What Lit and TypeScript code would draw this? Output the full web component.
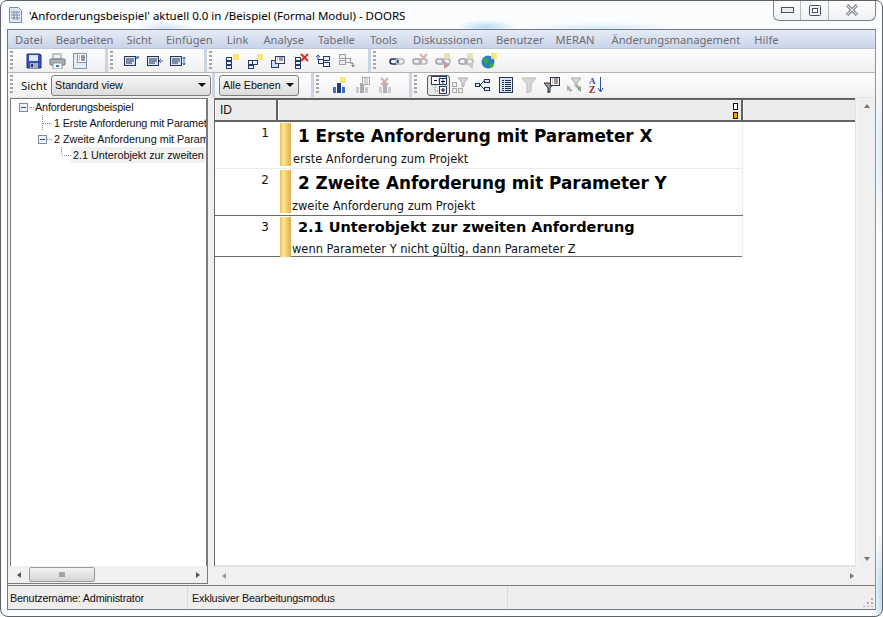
import { LitElement, html, css, svg } from "lit";
import { customElement } from "lit/decorators.js";

const ic = (body: unknown, w = 16, h = 16) =>
  html`<svg class="ic" width=${w} height=${h} viewBox="0 0 ${w} ${h}" xmlns="http://www.w3.org/2000/svg">${body}</svg>`;

const box = (x: number, y: number, w: number, h: number, s = "#223a70", f = "#e8eefa") =>
  svg`<rect x=${x + 0.5} y=${y + 0.5} width=${w} height=${h} fill=${f} stroke=${s}/>`;
const star = (x: number, y: number, c = "#f5d94a") =>
  svg`<rect x=${x} y=${y} width="6" height="6" fill=${c} opacity=".85"/><path d="M${x} ${y + 1}h6M${x} ${y + 3}h6M${x} ${y + 5}h6" stroke="#fff6b0" stroke-width=".6"/>`;
const redX = (x: number, y: number, c = "#e02a18") =>
  svg`<path d="M${x} ${y}l7 7M${x + 7} ${y}l-7 7" stroke=${c} stroke-width="2"/>`;
const lines = (x: number, y: number, n: number, w: number, c = "#1f2a44") =>
  svg`${Array.from({ length: n }, (_, i) => svg`<path d="M${x} ${y + i * 2 + 0.5}h${w}" stroke=${c}/>`)}`;

const save = ic(svg`<path d="M1 1h13l1 1v13H1z" fill="#3a4fb4" stroke="#20307c"/><rect x="3" y="2" width="9" height="6" fill="#dfe6f8"/><rect x="4" y="10" width="8" height="5" fill="#a8aec4"/><rect x="5" y="11" width="2" height="3" fill="#2a3575"/>`);
const printer = ic(svg`<rect x="4" y="1" width="8" height="5" fill="#eef0f4" stroke="#8a949e"/><rect x="1" y="6" width="15" height="6" rx="1" fill="#a8b0b8" stroke="#6c7680"/><rect x="4" y="10" width="9" height="6" fill="#fff" stroke="#8a949e"/><rect x="7" y="12" width="3" height="2" fill="#3a74c8"/>`, 17);
const docIcon = ic(svg`<rect x="1.500" y=".5" width="13" height="15" fill="#e4ecf6" stroke="#8296b4"/><rect x="5.500" y=".5" width="9" height="9" fill="#fff" stroke="#8296b4"/><path d="M7 3h1M7 5h1M7 7h1" stroke="#d8741c"/><path d="M9 3h4M9 5h4M9 7h4" stroke="#334"/>`);

const attr = (arrow: unknown) => ic(svg`<rect x=".5" y="3.500" width="11" height="9" fill="#d6e4f8" stroke="#26344f"/><path d="M2 6h8M2 8h8M2 10h6" stroke="#26344f"/>${arrow}`);
const a1 = attr(svg`<path d="M12 6l2-2M12 4h3M14 3v3" stroke="#3767c0" fill="none"/>`);
const a2 = attr(svg`<path d="M16 8h-4M14 6l-2 2 2 2" stroke="#3767c0" fill="none"/>`);
const a3 = attr(svg`<path d="M14 4v8M12.500 6L14 4l1.500 2M12.500 10l1.500 2 1.500-2" stroke="#3767c0" fill="none"/>`);

const stack = (s = "#223a70", f = "#e8eefa") => svg`${box(2, 4, 5, 3, s, f)}${box(2, 8, 5, 3, s, f)}${box(2, 12, 5, 3, s, f)}`;
const h1 = ic(svg`${stack()}${star(9, 1)}`);
const h2 = ic(svg`${box(1, 12, 5, 3)}${box(1, 7, 5, 4)}${box(5, 7, 5, 4)}${star(10, 1)}`);
const h3 = ic(svg`<rect x="1.500" y="7.500" width="7" height="7" fill="#d0def4" stroke="#2a3f70"/><rect x="5.500" y="3.500" width="9" height="7" fill="#fff" stroke="#2a3f70"/><path d="M7 5h1M7 7h1" stroke="#d8741c"/><path d="M9 5h4M9 7h4" stroke="#334"/>`);
const h4 = ic(svg`${stack()}${redX(8, 1)}`);
const h5 = ic(svg`<path d="M3 7V2M1 4l2-2 2 2" stroke="#2656c0" fill="none"/><path d="M4 8h4" stroke="#223a70"/>${box(8, 3, 6, 4)}${box(8, 9, 6, 4)}${box(3, 6, 5, 4)}`, 17);
const h6 = ic(svg`${box(1, 1, 6, 4, "#9aa0a8", "#eee")}${box(1, 7, 6, 4, "#9aa0a8", "#eee")}${box(7, 5, 5, 4, "#9aa0a8", "#eee")}<path d="M12 10h3v3M13.500 12l1.500 2 1.500-2" stroke="#777" fill="none"/>`, 17);

const link = (on: boolean) => svg`<rect x="1" y="6" width="8" height="5" rx="2.500" fill="none" stroke=${on ? "#1a2f7a" : "#9a9ea8"} stroke-width="1.500"/><rect x="7" y="6" width="8" height="5" rx="2.500" fill="none" stroke="#b0b4ba" stroke-width="1.500"/>`;
const l1 = ic(link(true));
const l2 = ic(svg`${link(false)}${redX(8, 1, "#c8b4ac")}`);
const l3 = ic(svg`${link(false)}${star(9, 0, "#d8d0b8")}<path d="M9 8l6 4-6 4z" fill="#c09a94"/>`);
const l4 = ic(svg`${link(false)}${star(9, 0, "#d8d0b8")}<path d="M15 8l-6 4 6 4z" fill="#cfc8bc"/>`);
const globe = ic(svg`<circle cx="7" cy="9" r="6.500" fill="#2d7fc4"/><path d="M3 5l4 1 1 3-3 3-2-3zM9 11l4-1-1 4-3 1z" fill="#3fa83a"/>${star(10, 0)}`);

const org = (c: string, c2: string) => svg`<rect x="2" y="10" width="3" height="6" fill=${c}/><rect x="6" y="6" width="4" height="10" fill=${c2}/><rect x="11" y="10" width="3" height="6" fill=${c}/>`;
const o1 = ic(svg`${org("#4070b8", "#1c3f88")}${star(9, 0)}`);
const o2 = ic(svg`${org("#c8cace", "#a8acb2")}<rect x="8.500" y=".5" width="7" height="7" fill="#fff" stroke="#aaa"/><path d="M10 2h4M10 4h4M10 6h4" stroke="#aaa"/>`);
const o3 = ic(svg`${org("#cbcdd0", "#b0b2b6")}${redX(4, 1, "#d4b0a8")}`);

const expand = ic(svg`<rect x="1.500" y="1.500" width="15" height="8" fill="#d6e4f4" stroke="#25405f"/><path d="M2 2h6v7H2z" fill="#fff"/><path d="M4 5.500h3" stroke="#111"/><rect x="9.500" y="3.500" width="7" height="6" fill="#f4f6fa" stroke="#25405f"/><path d="M11 6.500h4M13 4.500v4" stroke="#111"/><rect x="9.500" y="11.500" width="7" height="7" fill="#f4f6fa" stroke="#25405f"/><path d="M11 15h4M13 13v4" stroke="#111"/><path d="M5 10v6h4" stroke="#888" stroke-dasharray="1 1" fill="none"/>`, 18, 20);
const filt = (c: string, s: string) => svg`<path d="M1 1h14L10 7v7l-4 2V7z" fill=${c} stroke=${s}/>`;
const f1 = ic(svg`${box(0, 5, 4, 4, "#aaa", "#eee")}${box(0, 11, 4, 4, "#aaa", "#eee")}${box(6, 11, 4, 4, "#aaa", "#eee")}<path d="M6 1h10l-4 5v3l-2 1V6z" fill="#d4d4d4" stroke="#aaa"/>`);
const tree2 = ic(svg`<path d="M1 8h4M5 8l4-4M5 8l4 4" stroke="#22345a" fill="none"/><rect x="9.500" y="2.500" width="5" height="3" fill="#dde8f6" stroke="#22345a"/><rect x="9.500" y="10.500" width="5" height="3" fill="#dde8f6" stroke="#22345a"/><rect x=".5" y="6.500" width="4" height="3" fill="#dde8f6" stroke="#22345a"/>`);
const listIc = ic(svg`<rect x="1.500" y=".5" width="13" height="15" fill="#d8e6f4" stroke="#22345a"/>${lines(4, 3, 6, 2)}${lines(7, 3, 6, 6)}`);
const f2 = ic(filt("#d8d8d8", "#b8b8b8"));
const f3 = ic(svg`<path d="M0 6h10L6 11v4l-2 1v-5z" fill="#999" stroke="#333"/><rect x="6.500" y=".5" width="9" height="8" fill="#fff" stroke="#22345a"/><path d="M8 2h1M8 4h1M8 6h1" stroke="#d8741c"/><path d="M10 2h4M10 4h4M10 6h4" stroke="#334"/>`);
const f4 = ic(svg`<path d="M5 1h10l-4 5v3H9V6z" fill="#d4d4d4" stroke="#aaa"/><path d="M1 8l4 3-1 1 3 1-3 2-1-2-2 1z" fill="#9db89a"/><path d="M15 15l-4-3 1-1-3-1 3-2 1 2 2-1z" fill="#8aa888"/>`);
const az = ic(svg`<text x="0" y="7" font-family="Liberation Serif" font-weight="700" font-size="9" fill="#2c50a8">A</text><text x="0" y="15.500" font-family="Liberation Serif" font-weight="700" font-size="9.500" fill="#8a2a20">Z</text><path d="M11.500 0v14M9 11l2.500 4 2.500-4" stroke="#2c50a8" fill="none"/>`);

const tb1 = [[save, printer, docIcon], [a1, a2, a3], [h1, h2, h3, h4, h5, h6], [l1, l2, l3, l4, globe]];

const menu: [string, number][] = [["Datei", 0], ["Bearbeiten", -1], ["Sicht", -1], ["Einfügen", 0], ["Link", 0], ["Analyse", 1], ["Tabelle", 0], ["Tools", 1], ["Diskussionen", 2], ["Benutzer", -1], ["MERAN", -2], ["Änderungsmanagement", 3], ["Hilfe", 0]];

@customElement("app-root")
export class AppRoot extends LitElement {
  static styles = css`
    :host { display: block; width: 883px; height: 617px; font-family: "Noto Sans", sans-serif; color: #111; }
    * { box-sizing: border-box; }
    .win {
      position: relative; width: 883px; height: 617px; padding: 0 6px 6px 6px;
      border: 1px solid #5e6266; border-radius: 7px 7px 8px 8px;
      display: flex; flex-direction: column; overflow: hidden;
      background:
        radial-gradient(ellipse 30px 6px at 165px 27px, #cfe6f6, transparent),
        radial-gradient(ellipse 30px 7px at 485px 26px, #b8dcf2, transparent),
        radial-gradient(ellipse 80px 6px at 600px 27px, #d8ecf8, transparent),
        radial-gradient(ellipse 8px 60px at 880px 590px, #b8dcf2, transparent),
        radial-gradient(ellipse 8px 90px at 880px 150px, #d8ecf8, transparent),
        #fbfcfd;
    }
    .title { height: 28px; flex: none; display: flex; align-items: center; gap: 5px; padding: 0 0 0 1px; font-size: 11.500px; color: #000; white-space: nowrap; }
    .ctrl { position: absolute; left: 772px; top: -1px; width: 103px; height: 21px; display: grid; grid-template-columns: 27px 28px 1fr;
      border: 1px solid #7d8186; border-top: none; border-radius: 0 0 6px 6px; background: linear-gradient(#fff, #eef0f3); }
    .ctrl div { display: flex; align-items: center; justify-content: center; border-right: 1px solid #b6bbc0; }
    .ctrl div:last-child { border-right: none; }
    .client { flex: 1; display: flex; flex-direction: column; border: 1px solid #6f7880; border-right-color: #8b9298; min-height: 0; background: #f0f0f0; }
    .menu { height: 19px; flex: none; display: flex; align-items: center; padding: 0 0 0 7px; gap: 14px; font-size: 11.200px; color: #6e6e72;
      background: linear-gradient(#e6ebf6, #c9d3e9); border-bottom: 1px solid #bcc6da; white-space: nowrap; }
    .tb { flex: none; display: flex; align-items: center; white-space: nowrap; }
    .tb1 { height: 24px; background: linear-gradient(#fefefe, #efefef); border-bottom: 1px solid #b4b4b4; }
    .tb2 { height: 24px; background: linear-gradient(#fdfdfd, #f1f1f1); }
    .grip { width: 3px; height: 20px; margin: 0 3px 0 2px; flex: none; background: repeating-linear-gradient(#a6a6a6 0 2px, transparent 2px 4px); }
    .group { display: flex; align-items: center; flex: none; height: 100%; border-right: 3px solid #c9d4e4; }
    .group.last { border-right: none; }
    .btn { width: 23px; height: 20px; display: flex; align-items: center; justify-content: center; flex: none; }
    .ic { display: block; flex: none; }
    .g1 { width: 92px; padding-left: 6.500px; }
    .g2 { width: 91px; padding-left: 4px; }
    .g3 { width: 156px; padding-left: 5px; }
    .g4 { padding-left: 6px; }
    .tg1 { width: 207px; }
    .sicht { font-size: 11.500px; margin: 0 4px 0 5px; color: #111; }
    .combo { height: 21px; border: 1px solid #7f7f7f; border-radius: 3px; background: linear-gradient(#f6f6f6, #dcdcdc); display: flex; align-items: center; justify-content: space-between;
      font-family: "Liberation Sans", sans-serif; font-size: 10.700px; padding: 0 4px 0 3px; flex: none; color: #111; }
    .combo i { width: 0; height: 0; border: 4px solid transparent; border-top: 4px solid #111; border-bottom: none; }
    .c1 { width: 160px; }
    .tg2 { width: 99px; padding-left: 4px; }
    .c2 { width: 80px; }
    .tg3 { width: 90px; padding-left: 6px; }
    .tg3 .btn, .tg4 .btn { width: 22.800px; }
    .tg4 { padding-left: 7px; }
    .tg4 .toggled { width: 23px; height: 21px; border: 1px solid #5a5a5a; border-radius: 3px; background: #e9e9e9; margin-right: -1px; }
    .main { flex: 1; min-height: 0; display: flex; background: #f0f0f0; border-top: 1px solid #e6e6e6; border-bottom: 1px solid #7c7c7c; }
    .left { width: 200px; flex: none; display: flex; flex-direction: column; padding: 0 0 0 2px; border: 1px solid #7b7b7b; border-top: none; border-left: none; margin-bottom: 1px; background: #f0f0f0; }
    .tree { flex: 1; min-height: 0; background: #fff; border: 1px solid #7c7c7c; border-bottom: none; overflow: hidden; font-family: "Liberation Sans", sans-serif; font-size: 10.800px; color: #111; letter-spacing: -.15px; }
    .node { height: 16px; display: flex; align-items: center; white-space: nowrap; }
    .node svg { flex: none; }
    .n0 { padding-left: 8px; }
    .n1 { padding-left: 31px; }
    .n2 { padding-left: 27px; letter-spacing: 0; }
    .n3 { padding-left: 50px; letter-spacing: 0; }
    .t0 { margin-left: -1px; }
    .sel { background: #f0f0f0; padding: 0 2px; height: 16px; line-height: 16px; width: 134px; overflow: hidden; flex: none; }
    .sb-h { height: 17px; flex: none; display: flex; align-items: center; background: #f0f0f0; }
    .thumb { width: 66px; height: 15px; margin-left: 8px; border: 1px solid #9a9a9a; border-radius: 2px; background: linear-gradient(#f4f4f4, #d4d4d4); display: flex; align-items: center; justify-content: center; }
    .ar { width: 0; height: 0; border: 3.500px solid transparent; flex: none; }
    .ar.l { border-right: 4px solid #555; border-left: none; margin-left: 7px; }
    .ar.r { border-left: 4px solid #555; border-right: none; }
    .left .ar.r { margin-right: 7px; }
    .spacer { flex: 1; }
    .right { flex: 1; min-width: 0; margin-left: 6px; display: flex; flex-direction: column; }
    .view { flex: 1; min-height: 0; display: flex; }
    .sheet { width: 642px; flex: none; background: #fff; border-left: 1px solid #6a6a6a; border-right: 1px solid #e3e3e3; border-bottom: 2px solid #e3e3e3; display: flex; flex-direction: column; }
    .head { height: 24px; flex: none; display: grid; grid-template-columns: 63px 465px 1fr; background: #ececec; border-top: 2px solid #636363; border-bottom: 2px solid #636363; font-family: "Liberation Sans", sans-serif; font-size: 12px; }
    .hc { display: flex; align-items: center; padding-left: 5px; border-right: 2px solid #616161; box-shadow: inset 1px 0 0 #fff; position: relative; }
    .hc:last-child { border-right: none; }
    .flags { position: absolute; right: 3px; top: 3px; display: flex; flex-direction: column; gap: 2px; }
    .flags span { width: 5px; height: 7px; border: 1px solid #111; background: #fff; display: block; }
    .flags span + span { background: #f2a100; }
    .row { display: grid; grid-template-columns: 63px 465px; width: 528px; flex: none; font-family: "DejaVu Sans", sans-serif; }
    .row .id { text-align: right; padding: 4px 9px 0 0; font-size: 12px; }
    .r1 { height: 47px; border-bottom: 1px solid #ececec; }
    .r2 { height: 47px; border-bottom: 1px solid #6d6d6d; }
    .r3 { height: 41px; border-bottom: 1px solid #6d6d6d; }
    .cell { display: flex; align-items: stretch; padding-left: 2px; min-width: 0; border-right: 1px solid #ececec; }
    .bar { width: 11px; flex: none; margin: 1px 0 2px; background: linear-gradient(90deg, #e9bd5c, #ffe98e 30%, #f4d277 55%, #dcae56); }
    .r3 .bar { margin-bottom: 0; }
    .txt { min-width: 0; white-space: nowrap; display: flex; flex-direction: column; }
    h2 { margin: 0; font-size: 16.850px; line-height: 28px; font-weight: 700; padding-left: 7px; color: #000; }
    .r3 h2 { font-size: 14.500px; line-height: 23px; }
    p { margin: 0; font-size: 11.450px; line-height: 15px; padding: 2px 0 0 2px; color: #111; }
    .r2 p, .r3 p { padding-left: 1px; }
    .r3 p { padding-top: 3px; }
    .sb-v { width: 18px; flex: none; margin-left: auto; background: #efefef; display: flex; flex-direction: column; justify-content: space-between; align-items: center; padding: 6px 0; border-left: 1px solid #f6f6f6; }
    .ar.u { border-bottom: 4px solid #777; border-top: none; }
    .ar.d { border-top: 4px solid #777; border-bottom: none; }
    .right .sb-h { height: 18px; padding-right: 21px; }
    .right .ar.l { margin-left: 8px; border-right-color: #999; }
    .right .ar.r { border-left-color: #777; }
    .status { height: 23px; flex: none; display: grid; grid-template-columns: 180px 320px 1fr; background: #f0eded; font-family: "Liberation Sans", sans-serif; font-size: 10.800px; letter-spacing: -.2px; color: #111; }
    .status div { display: flex; align-items: center; padding-left: 2px; border-right: 1px solid #dcdada; position: relative; }
    .status div + div { padding-left: 4px; }
    .status div:last-child { border-right: none; }
    .rz { position: absolute; right: 2px; bottom: 2px; }
  `;

  render() {
    const grp = (cls: string, items: unknown[], last = false) => html`<div class="group ${cls} ${last ? "last" : ""}">${items.map((i) => html`<div class="btn">${i}</div>`)}</div>`;
    const toolbar1 = tb1.map((g, i) => html`${i ? html`<div class="grip"></div>` : ""}${grp(["g1", "g2", "g3", "g4"][i], g, i === 3)}`);
    const arrowGrip = html`<svg width="7" height="7" viewBox="0 0 7 7"><path d="M1 1v5M3 1v5M5 1v5" stroke="#666"/></svg>`;
    return html`
      <div class="win">
        <div class="title">
          ${ic(svg`<path d="M1.500 .5h9l3 3v12h-12z" fill="#dfe6f0" stroke="#7f8ea5"/><path d="M3 5h9M3 8h9M3 11h9M6 5v8M9 5v8" stroke="#7b8ca8"/>`)}
          <span>'Anforderungsbeispiel' aktuell 0.0 in /Beispiel (Formal Modul) - DOORS</span>
        </div>
        <div class="ctrl">
          <div><svg width="13" height="6"><rect x=".5" y=".5" width="12" height="5" fill="#e8edf2" stroke="#4a5058"/></svg></div>
          <div><svg width="12" height="11"><rect x=".5" y=".5" width="11" height="10" rx="1" fill="#eef" stroke="#4a5058"/><rect x="3.500" y="3.500" width="5" height="4" fill="#fff" stroke="#4a5058"/></svg></div>
          <div><svg width="14" height="12"><path d="M2 1l10 10M12 1L2 11" stroke="#5c6268" stroke-width="3"/><path d="M2 1l10 10M12 1L2 11" stroke="#e8ecf0" stroke-width="1.200"/></svg></div>
        </div>
        <div class="client">
          <div class="menu">
            ${menu.map(([m, d]) => html`<span style="margin-left:${d}px">${m}</span>`)}
          </div>
          <div class="tb tb1"><div class="grip"></div>${toolbar1}</div>
          <div class="tb tb2">
            <div class="group tg1"><div class="grip"></div><span class="sicht">Sicht</span><div class="combo c1">Standard view<i></i></div></div>
            <div class="group tg2"><div class="combo c2">Alle Ebenen<i></i></div></div>
            <div class="grip"></div>
            <div class="group tg3">${[o1, o2, o3].map((i) => html`<div class="btn">${i}</div>`)}</div>
            <div class="grip"></div>
            <div class="group tg4 last">
              <div class="btn toggled">${expand}</div>
              ${[f1, tree2, listIc, f2, f3, f4, az].map((i) => html`<div class="btn">${i}</div>`)}
            </div>
          </div>
          <div class="main">
            <div class="left">
              <div class="tree">
                <div class="node n0">
                  <svg width="10" height="9" viewBox="0 0 10 9"><rect x=".5" y=".5" width="8" height="8" fill="#eef1f5" stroke="#7b8a9c"/><path d="M2 4.500h5" stroke="#2850a8"/></svg>
                  <svg width="7" height="3"><path d="M0 1.500h6" stroke="#888" stroke-dasharray="1 1"/></svg><span class="t0">Anforderungsbeispiel</span>
                </div>
                <div class="node n1"><svg width="12" height="16"><path d="M.5 0v16M1 8.500h10" stroke="#888" stroke-dasharray="1 1"/></svg><span>1 Erste Anforderung mit Parameter X</span></div>
                <div class="node n2"><svg width="9" height="9"><rect x=".5" y=".5" width="8" height="8" fill="#eef1f5" stroke="#7b8a9c"/><path d="M2 4.500h5" stroke="#2850a8"/></svg><svg width="7" height="3"><path d="M0 1.500h6" stroke="#888" stroke-dasharray="1 1"/></svg><span>2 Zweite Anforderung mit Parameter Y</span></div>
                <div class="node n3"><svg width="10" height="16"><path d="M.5 0v8M1 8.500h9" stroke="#888" stroke-dasharray="1 1"/></svg><span class="sel">2.1 Unterobjekt zur zweiten Anforderung</span></div>
              </div>
              <div class="sb-h"><i class="ar l"></i><div class="thumb">${arrowGrip}</div><div class="spacer"></div><i class="ar r"></i></div>
            </div>
            <div class="right">
              <div class="view">
                <div class="sheet">
                  <div class="head"><div class="hc">ID</div><div class="hc"><div class="flags"><span></span><span></span></div></div><div class="hc"></div></div>
                  <div class="row r1"><div class="id">1</div><div class="cell"><div class="bar"></div><div class="txt"><h2>1 Erste Anforderung mit Parameter X</h2><p>erste Anforderung zum Projekt</p></div></div></div>
                  <div class="row r2"><div class="id">2</div><div class="cell"><div class="bar"></div><div class="txt"><h2>2 Zweite Anforderung mit Parameter Y</h2><p>zweite Anforderung zum Projekt</p></div></div></div>
                  <div class="row r3"><div class="id">3</div><div class="cell"><div class="bar"></div><div class="txt"><h2>2.1 Unterobjekt zur zweiten Anforderung</h2><p>wenn Parameter Y nicht gültig, dann Parameter Z</p></div></div></div>
                </div>
                <div class="sb-v"><i class="ar u"></i><i class="ar d"></i></div>
              </div>
              <div class="sb-h"><i class="ar l"></i><div class="spacer"></div><i class="ar r"></i></div>
            </div>
          </div>
          <div class="status">
            <div>Benutzername: Administrator</div>
            <div>Exklusiver Bearbeitungsmodus</div>
            <div><svg class="rz" width="10" height="10"><path d="M8 1h2v2H8zM8 5h2v2H8zM8 9h2v1H8zM4 5h2v2H4zM4 9h2v1H4zM0 9h2v1H0z" fill="#b4b0b0"/></svg></div>
          </div>
        </div>
      </div>
    `;
  }
}
